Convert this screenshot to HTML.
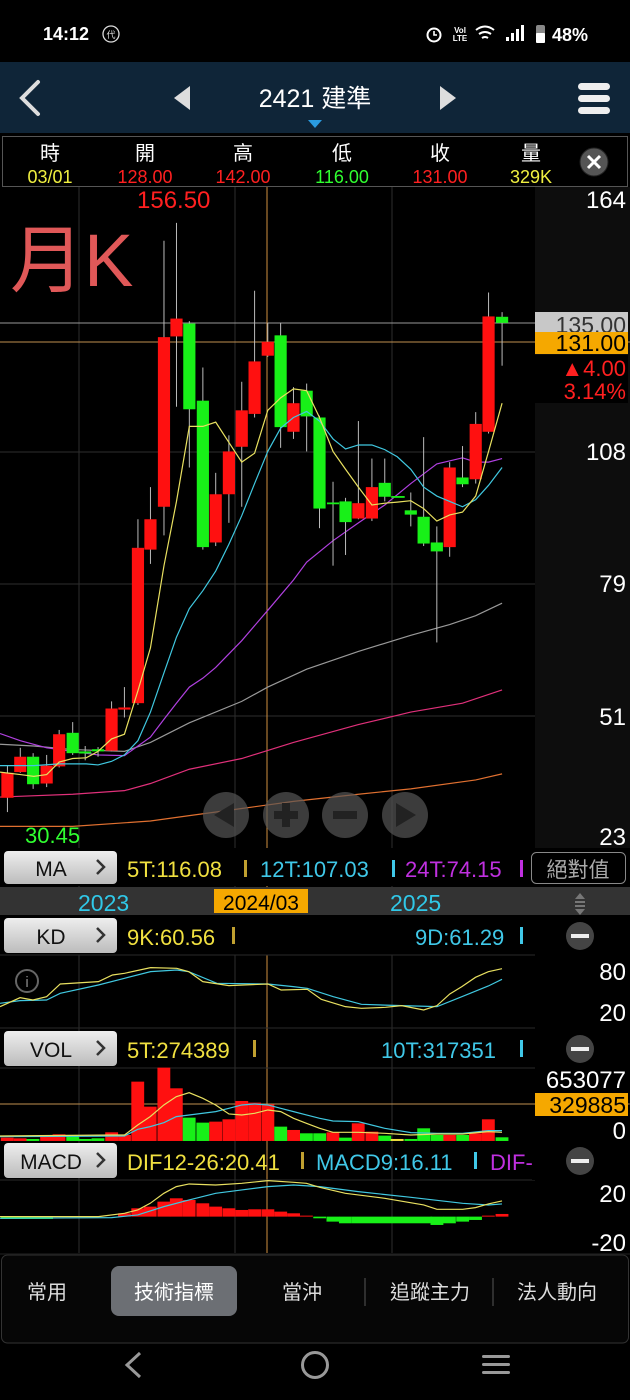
<!DOCTYPE html>
<html><head><meta charset="utf-8"><style>
html,body{margin:0;padding:0;background:#000;width:630px;height:1400px;overflow:hidden}
svg{display:block}
text{font-family:"Liberation Sans","Noto Sans CJK TC",sans-serif}
</style></head><body>
<svg width="630" height="1400" viewBox="0 0 630 1400" xmlns="http://www.w3.org/2000/svg">
<rect width="630" height="1400" fill="#000"/>
<!-- status bar -->
<text x="43" y="40" font-size="18" fill="#fff" font-weight="bold">14:12</text>
<circle cx="111" cy="34" r="8" fill="none" stroke="#ddd" stroke-width="1.3"/>
<text x="111" y="38" font-size="9" fill="#ddd" text-anchor="middle">代</text>
<circle cx="434" cy="35" r="6.5" fill="none" stroke="#fff" stroke-width="2"/>
<path d="M434 31v4h3" stroke="#fff" stroke-width="1.6" fill="none"/>
<text x="460" y="33" font-size="8" fill="#fff" font-weight="bold" text-anchor="middle">Vol</text>
<text x="460" y="41" font-size="8" fill="#fff" font-weight="bold" text-anchor="middle">LTE</text>
<path d="M476 30q9-7 18 0M479 34q6-4 12 0M482 38q3-2 6 0" stroke="#fff" stroke-width="2" fill="none"/>
<rect x="506" y="37" width="3" height="4" fill="#fff"/><rect x="511" y="33" width="3" height="8" fill="#fff"/><rect x="516" y="29" width="3" height="12" fill="#fff"/><rect x="521" y="25" width="3" height="16" fill="#fff"/>
<rect x="536" y="25" width="9" height="18" rx="2" fill="#888"/><rect x="536" y="33" width="9" height="10" rx="1" fill="#fff"/>
<text x="552" y="41" font-size="18" fill="#fff" font-weight="bold">48%</text>
<!-- nav -->
<rect x="0" y="62" width="630" height="71" fill="#0f2538"/>
<path d="M38 82 L22 98 L38 114" stroke="#ddd" stroke-width="4" fill="none" stroke-linecap="round"/>
<polygon points="174,98 190,86 190,110" fill="#ddd"/>
<polygon points="440,86 456,98 440,110" fill="#ddd"/>
<text x="315" y="107" font-size="25" fill="#fff" text-anchor="middle">2421 建準</text>
<polygon points="308,120 322,120 315,128" fill="#2a9be0"/>
<rect x="578" y="83" width="32" height="7" rx="3.5" fill="#eee"/><rect x="578" y="95" width="32" height="7" rx="3.5" fill="#eee"/><rect x="578" y="107" width="32" height="7" rx="3.5" fill="#eee"/>
<!-- info row -->
<rect x="2.5" y="136.5" width="625" height="50" fill="#000" stroke="#555"/>
<g font-size="20" fill="#fff" text-anchor="middle">
<text x="50" y="160">時</text><text x="145" y="160">開</text><text x="243" y="160">高</text><text x="342" y="160">低</text><text x="440" y="160">收</text><text x="531" y="160">量</text></g>
<g font-size="18" text-anchor="middle">
<text x="50" y="183" fill="#f0f040">03/01</text><text x="145" y="183" fill="#ff2020">128.00</text><text x="243" y="183" fill="#ff2020">142.00</text><text x="342" y="183" fill="#30ff30">116.00</text><text x="440" y="183" fill="#ff2020">131.00</text><text x="531" y="183" fill="#f0f040">329K</text></g>
<circle cx="594" cy="162" r="14" fill="#555" stroke="#222"/>
<path d="M588 156l12 12M600 156l-12 12" stroke="#fff" stroke-width="3"/>
<!-- chart right axis -->
<rect x="535" y="187" width="95" height="661" fill="#0d0d0d"/>
<!-- grid -->
<g stroke="#2e2e2e" stroke-width="1">
<line x1="79" y1="187" x2="79" y2="1253"/><line x1="235" y1="187" x2="235" y2="1253"/><line x1="392" y1="187" x2="392" y2="1253"/>
<line x1="0" y1="452" x2="535" y2="452"/><line x1="0" y1="584" x2="535" y2="584"/><line x1="0" y1="716" x2="535" y2="716"/>
</g>
<line x1="0" y1="323" x2="535" y2="323" stroke="#999"/>
<line x1="0" y1="342" x2="630" y2="342" stroke="#c09050"/>
<line x1="267" y1="187" x2="267" y2="1253" stroke="#d09040"/>
<text x="10" y="286" font-size="74" fill="#e05858">月K</text>
<text x="137" y="208" font-size="24" fill="#ff2020">156.50</text>
<!-- MA lines -->
<g transform="translate(0,280) scale(0.3381,0.3571)" fill="none" stroke-width="1.2">
<polyline vector-effect="non-scaling-stroke" stroke="#e07030" points="0,1530 215,1530 445,1515 560,1500 715,1480 868,1460 1060,1440 1215,1425 1407,1400 1485,1383"/>
<polyline vector-effect="non-scaling-stroke" stroke="#e0307a" points="0,1448 215,1440 368,1430 445,1410 560,1370 715,1340 868,1295 1060,1245 1215,1210 1368,1185 1485,1148"/>
<polyline vector-effect="non-scaling-stroke" stroke="#999" points="0,1300 100,1305 215,1315 368,1320 445,1295 560,1240 715,1180 792,1140 907,1090 1060,1040 1215,995 1330,965 1407,940 1485,905"/>
<polyline vector-effect="non-scaling-stroke" stroke="#b040e0" points="0,1270 60,1290 138,1310 215,1320 290,1330 368,1332 408,1305 445,1280 485,1230 522,1185 560,1140 600,1115 638,1085 715,1010 792,925 868,840 907,790 985,730 1060,680 1138,630 1215,570 1292,515 1368,498 1407,510 1445,510 1485,500"/>
</g>
<!-- candles -->
<g transform="translate(0,280) scale(0.3381,0.3571)">
<g stroke="#bbb" stroke-width="1">
<line vector-effect="non-scaling-stroke" x1="22" y1="1360" x2="22" y2="1490"/><line vector-effect="non-scaling-stroke" x1="60" y1="1310" x2="60" y2="1380"/><line vector-effect="non-scaling-stroke" x1="98" y1="1325" x2="98" y2="1425"/><line vector-effect="non-scaling-stroke" x1="138" y1="1330" x2="138" y2="1420"/><line vector-effect="non-scaling-stroke" x1="175" y1="1260" x2="175" y2="1365"/><line vector-effect="non-scaling-stroke" x1="215" y1="1238" x2="215" y2="1330"/><line vector-effect="non-scaling-stroke" x1="252" y1="1305" x2="252" y2="1345"/><line vector-effect="non-scaling-stroke" x1="290" y1="1308" x2="290" y2="1335"/><line vector-effect="non-scaling-stroke" x1="330" y1="1180" x2="330" y2="1320"/><line vector-effect="non-scaling-stroke" x1="368" y1="1140" x2="368" y2="1225"/><line vector-effect="non-scaling-stroke" x1="408" y1="670" x2="408" y2="1190"/><line vector-effect="non-scaling-stroke" x1="445" y1="580" x2="445" y2="795"/><line vector-effect="non-scaling-stroke" x1="485" y1="-110" x2="485" y2="715"/><line vector-effect="non-scaling-stroke" x1="522" y1="-160" x2="522" y2="355"/><line vector-effect="non-scaling-stroke" x1="560" y1="115" x2="560" y2="525"/><line vector-effect="non-scaling-stroke" x1="600" y1="245" x2="600" y2="755"/><line vector-effect="non-scaling-stroke" x1="638" y1="540" x2="638" y2="745"/><line vector-effect="non-scaling-stroke" x1="677" y1="435" x2="677" y2="680"/><line vector-effect="non-scaling-stroke" x1="715" y1="285" x2="715" y2="635"/><line vector-effect="non-scaling-stroke" x1="753" y1="30" x2="753" y2="385"/><line vector-effect="non-scaling-stroke" x1="792" y1="120" x2="792" y2="215"/><line vector-effect="non-scaling-stroke" x1="830" y1="120" x2="830" y2="470"/><line vector-effect="non-scaling-stroke" x1="868" y1="300" x2="868" y2="445"/><line vector-effect="non-scaling-stroke" x1="907" y1="290" x2="907" y2="480"/><line vector-effect="non-scaling-stroke" x1="945" y1="380" x2="945" y2="695"/><line vector-effect="non-scaling-stroke" x1="985" y1="565" x2="985" y2="800"/><line vector-effect="non-scaling-stroke" x1="1022" y1="610" x2="1022" y2="770"/><line vector-effect="non-scaling-stroke" x1="1060" y1="395" x2="1060" y2="670"/><line vector-effect="non-scaling-stroke" x1="1100" y1="500" x2="1100" y2="675"/><line vector-effect="non-scaling-stroke" x1="1138" y1="500" x2="1138" y2="620"/><line vector-effect="non-scaling-stroke" x1="1215" y1="595" x2="1215" y2="690"/><line vector-effect="non-scaling-stroke" x1="1253" y1="440" x2="1253" y2="745"/><line vector-effect="non-scaling-stroke" x1="1292" y1="690" x2="1292" y2="1015"/><line vector-effect="non-scaling-stroke" x1="1330" y1="510" x2="1330" y2="775"/><line vector-effect="non-scaling-stroke" x1="1368" y1="465" x2="1368" y2="580"/><line vector-effect="non-scaling-stroke" x1="1407" y1="370" x2="1407" y2="570"/><line vector-effect="non-scaling-stroke" x1="1445" y1="35" x2="1445" y2="430"/><line vector-effect="non-scaling-stroke" x1="1485" y1="90" x2="1485" y2="240"/>
</g>
<g fill="#ff1010">
<rect x="4" y="1380" width="36" height="70"/><rect x="42" y="1335" width="36" height="43"/><rect x="120" y="1360" width="36" height="50"/><rect x="157" y="1272" width="36" height="90"/><rect x="312" y="1200" width="36" height="118"/><rect x="350" y="1197" width="36" height="6"/><rect x="390" y="750" width="36" height="435"/><rect x="427" y="670" width="36" height="85"/><rect x="467" y="160" width="36" height="475"/><rect x="504" y="108" width="36" height="50"/><rect x="620" y="600" width="36" height="135"/><rect x="659" y="480" width="36" height="120"/><rect x="697" y="365" width="36" height="102"/><rect x="735" y="228" width="36" height="147"/><rect x="774" y="173" width="36" height="39"/><rect x="850" y="345" width="36" height="80"/><rect x="1042" y="625" width="36" height="43"/><rect x="1082" y="580" width="36" height="88"/><rect x="1312" y="525" width="36" height="223"/><rect x="1389" y="403" width="36" height="155"/><rect x="1427" y="102" width="36" height="323"/>
</g>
<g fill="#18f018">
<rect x="80" y="1335" width="36" height="77"/><rect x="197" y="1268" width="36" height="57"/><rect x="234" y="1320" width="36" height="6"/><rect x="272" y="1314" width="36" height="6"/><rect x="542" y="122" width="36" height="240"/><rect x="582" y="338" width="36" height="410"/><rect x="812" y="155" width="36" height="257"/><rect x="889" y="310" width="36" height="72"/><rect x="927" y="385" width="36" height="255"/><rect x="967" y="623" width="36" height="5"/><rect x="1004" y="620" width="36" height="58"/><rect x="1120" y="568" width="36" height="39"/><rect x="1157" y="605" width="40" height="5"/><rect x="1197" y="645" width="36" height="12"/><rect x="1235" y="663" width="36" height="75"/><rect x="1274" y="735" width="36" height="25"/><rect x="1350" y="553" width="36" height="19"/><rect x="1467" y="103" width="36" height="17"/>
</g>
<g fill="none" stroke-width="1.2">
<polyline vector-effect="non-scaling-stroke" stroke="#40c8e0" points="0,1360 100,1360 175,1355 255,1355 290,1358 330,1348 368,1330 408,1290 445,1210 485,1100 522,1000 560,920 600,870 638,815 677,740 715,660 753,570 792,480 830,415 868,385 907,368 945,395 985,445 1022,473 1060,462 1100,462 1138,475 1175,495 1215,530 1253,580 1292,605 1330,620 1368,635 1407,615 1445,575 1485,525"/>
<polyline vector-effect="non-scaling-stroke" stroke="#e8e060" points="0,1378 60,1385 100,1390 138,1385 175,1350 215,1340 255,1338 290,1320 330,1285 368,1272 408,1150 445,1030 485,800 522,620 560,410 600,410 638,398 677,455 715,510 753,485 792,365 830,330 868,305 907,310 945,385 985,480 1022,530 1060,580 1100,630 1138,625 1175,622 1215,618 1253,640 1292,675 1330,658 1368,650 1407,605 1445,480 1485,345"/>
</g>
</g>
<!-- zoom buttons -->
<g fill="#555" fill-opacity="0.7">
<circle cx="226" cy="815" r="23"/><circle cx="286" cy="815" r="23"/><circle cx="345" cy="815" r="23"/><circle cx="405" cy="815" r="23"/></g>
<g fill="#222">
<polygon points="214,815 234,803 234,827"/><rect x="274" y="811" width="24" height="8"/><rect x="282" y="803" width="8" height="24"/><rect x="333" y="811" width="24" height="8"/><polygon points="396,803 416,815 396,827"/></g>
<text x="25" y="843" font-size="22" fill="#30ff30">30.45</text>
<!-- right axis labels -->
<g font-size="24" fill="#fff" text-anchor="end">
<text x="626" y="208">164</text><text x="626" y="460">108</text><text x="626" y="592">79</text><text x="626" y="725">51</text><text x="626" y="845">23</text></g>
<rect x="535" y="312" width="93" height="21" fill="#c8c8c8"/>
<text x="626" y="333" font-size="23" fill="#333" text-anchor="end">135.00</text>
<rect x="535" y="332" width="93" height="22" fill="#f5a800"/>
<text x="626" y="351" font-size="23" fill="#000" text-anchor="end">131.00</text>
<rect x="535" y="355" width="93" height="48" fill="#000"/>
<text x="626" y="376" font-size="22" fill="#ff2020" text-anchor="end">▲4.00</text>
<text x="626" y="399" font-size="22" fill="#ff2020" text-anchor="end">3.14%</text>
<!-- MA row -->
<rect x="0" y="848" width="630" height="38" fill="#000"/>
<defs><linearGradient id="bg" x1="0" y1="0" x2="0" y2="1"><stop offset="0" stop-color="#eee"/><stop offset="1" stop-color="#bcbcbc"/></linearGradient></defs>
<rect x="4" y="851" width="113" height="33" rx="4" fill="url(#bg)"/>
<text x="51" y="876" font-size="21" fill="#111" text-anchor="middle">MA</text>
<path d="M97 860l7 7-7 7" stroke="#333" stroke-width="2.5" fill="none"/>
<g font-size="22"><text x="127" y="877" fill="#f0e040">5T:116.08</text><text x="260" y="877" fill="#40c8e8">12T:107.03</text><text x="405" y="877" fill="#c030e0">24T:74.15</text></g>
<rect x="244" y="860" width="3" height="17" fill="#c0a030"/><rect x="392" y="860" width="3" height="17" fill="#40c8e8"/><rect x="520" y="860" width="3" height="17" fill="#c030e0"/>
<rect x="531.5" y="852.5" width="94" height="31" rx="5" fill="#000" stroke="#888"/>
<text x="578" y="877" font-size="21" fill="#aaa" text-anchor="middle">絕對值</text>
<!-- date bar -->
<rect x="0" y="887" width="630" height="28" fill="#333"/>
<g font-size="23"><text x="78" y="911" fill="#30c8e8">2023</text><text x="390" y="911" fill="#30c8e8">2025</text></g>
<rect x="214" y="889" width="94" height="24" fill="#f5a800"/>
<text x="261" y="910" font-size="21" fill="#000" text-anchor="middle">2024/03</text>
<polygon points="575,899 585,899 580,893" fill="#777"/><rect x="575" y="901" width="10" height="2" fill="#777"/><rect x="575" y="905" width="10" height="2" fill="#777"/><polygon points="575,909 585,909 580,915" fill="#777"/>
<!-- KD row -->
<rect x="0" y="915" width="535" height="40" fill="#000"/>
<rect x="4" y="918" width="113" height="35" rx="4" fill="url(#bg)"/>
<text x="51" y="944" font-size="21" fill="#111" text-anchor="middle">KD</text>
<path d="M97 928l7 7-7 7" stroke="#333" stroke-width="2.5" fill="none"/>
<text x="127" y="945" font-size="22" fill="#f0e040">9K:60.56</text>
<rect x="232" y="927" width="3" height="17" fill="#c0a030"/>
<text x="415" y="945" font-size="22" fill="#40c8e8">9D:61.29</text>
<rect x="520" y="927" width="3" height="17" fill="#40c8e8"/>
<g fill="#444"><circle cx="580" cy="936" r="14"/><circle cx="580" cy="1049" r="14"/><circle cx="580" cy="1161" r="14"/></g>
<g fill="#eee"><rect x="571" y="934" width="18" height="4"/><rect x="571" y="1047" width="18" height="4"/><rect x="571" y="1159" width="18" height="4"/></g>
<line x1="0" y1="955" x2="535" y2="955" stroke="#2a2a2a"/>
<line x1="0" y1="1028" x2="535" y2="1028" stroke="#2a2a2a"/>
<line x1="0" y1="1068" x2="535" y2="1068" stroke="#2a2a2a"/>
<line x1="0" y1="1180" x2="535" y2="1180" stroke="#2a2a2a"/>
<circle cx="27" cy="981" r="11" fill="none" stroke="#666" stroke-width="2"/>
<text x="27" y="987" font-size="15" fill="#888" text-anchor="middle">i</text>
<g font-size="24" fill="#fff" text-anchor="end"><text x="626" y="980">80</text><text x="626" y="1021">20</text><text x="626" y="1088">653077</text><text x="626" y="1139">0</text><text x="626" y="1202">20</text><text x="626" y="1251">-20</text></g>
<!-- VOL row -->
<rect x="4" y="1031" width="113" height="35" rx="4" fill="url(#bg)"/>
<text x="51" y="1057" font-size="21" fill="#111" text-anchor="middle">VOL</text>
<path d="M97 1041l7 7-7 7" stroke="#333" stroke-width="2.5" fill="none"/>
<text x="127" y="1058" font-size="22" fill="#f0e040">5T:274389</text>
<rect x="253" y="1040" width="3" height="17" fill="#c0a030"/>
<text x="381" y="1058" font-size="22" fill="#40c8e8">10T:317351</text>
<rect x="520" y="1040" width="3" height="17" fill="#40c8e8"/>
<!-- MACD row -->
<rect x="4" y="1143" width="113" height="35" rx="4" fill="url(#bg)"/>
<text x="51" y="1169" font-size="21" fill="#111" text-anchor="middle">MACD</text>
<path d="M97 1153l7 7-7 7" stroke="#333" stroke-width="2.5" fill="none"/>
<text x="127" y="1170" font-size="22" fill="#f0e040">DIF12-26:20.41</text>
<rect x="301" y="1152" width="3" height="17" fill="#c0a030"/>
<text x="316" y="1170" font-size="22" fill="#40c8e8">MACD9:16.11</text>
<rect x="474" y="1152" width="3" height="17" fill="#40c8e8"/>
<text x="490" y="1170" font-size="22" fill="#c030e0">DIF-</text>
<rect x="532" y="1140" width="3" height="40" fill="#000"/>
<!-- lower panels drawing -->
<g transform="translate(0,840) scale(0.4016,0.3333)">
<line vector-effect="non-scaling-stroke" x1="0" y1="792" x2="1568" y2="792" stroke="#c09050"/>
<g fill="#ff1010">
<rect x="2" y="893" width="32" height="10"/><rect x="34" y="895" width="32" height="8"/><rect x="100" y="885" width="32" height="18"/><rect x="131" y="883" width="32" height="20"/><rect x="262" y="877" width="32" height="26"/><rect x="294" y="885" width="32" height="18"/><rect x="327" y="725" width="32" height="178"/><rect x="358" y="800" width="32" height="103"/><rect x="392" y="683" width="32" height="220"/><rect x="423" y="745" width="32" height="158"/><rect x="521" y="845" width="32" height="58"/><rect x="554" y="838" width="32" height="65"/><rect x="586" y="783" width="32" height="120"/><rect x="618" y="788" width="32" height="115"/><rect x="651" y="793" width="32" height="110"/><rect x="715" y="870" width="32" height="33"/><rect x="813" y="877" width="32" height="26"/><rect x="876" y="850" width="32" height="53"/><rect x="910" y="875" width="32" height="28"/><rect x="1103" y="885" width="32" height="18"/><rect x="1168" y="880" width="32" height="23"/><rect x="1200" y="838" width="32" height="65"/>
</g>
<g fill="#18f018">
<rect x="66" y="897" width="32" height="6"/><rect x="165" y="885" width="32" height="18"/><rect x="196" y="897" width="32" height="6"/><rect x="228" y="895" width="32" height="8"/><rect x="455" y="833" width="32" height="70"/><rect x="489" y="848" width="32" height="55"/><rect x="683" y="860" width="32" height="43"/><rect x="747" y="880" width="32" height="23"/><rect x="780" y="880" width="32" height="23"/><rect x="844" y="893" width="32" height="10"/><rect x="942" y="887" width="32" height="16"/><rect x="1007" y="897" width="32" height="6"/><rect x="1039" y="865" width="32" height="38"/><rect x="1072" y="885" width="32" height="18"/><rect x="1136" y="885" width="32" height="18"/><rect x="1234" y="892" width="32" height="11"/>
</g>
<rect x="973" y="897" width="32" height="6" fill="#f0e040"/>
<!-- MACD hist -->
<g fill="#ff1010">
<rect x="294" y="1120" width="32" height="10"/><rect x="327" y="1105" width="32" height="25"/><rect x="358" y="1100" width="32" height="30"/><rect x="392" y="1085" width="32" height="45"/><rect x="423" y="1075" width="32" height="55"/><rect x="455" y="1080" width="32" height="50"/><rect x="489" y="1090" width="32" height="40"/><rect x="521" y="1100" width="32" height="30"/><rect x="554" y="1105" width="32" height="25"/><rect x="586" y="1110" width="32" height="20"/><rect x="618" y="1108" width="32" height="22"/><rect x="651" y="1108" width="32" height="22"/><rect x="683" y="1115" width="32" height="15"/><rect x="715" y="1120" width="32" height="10"/><rect x="747" y="1127" width="32" height="3"/><rect x="1200" y="1127" width="32" height="3"/><rect x="1234" y="1122" width="32" height="8"/>
</g>
<g fill="#18f018">
<rect x="2" y="1130" width="130" height="7"/><rect x="780" y="1130" width="32" height="5"/><rect x="813" y="1130" width="32" height="15"/><rect x="844" y="1130" width="32" height="20"/><rect x="876" y="1130" width="200" height="20"/><rect x="1072" y="1130" width="32" height="25"/><rect x="1103" y="1130" width="32" height="20"/><rect x="1136" y="1130" width="32" height="15"/><rect x="1168" y="1130" width="32" height="10"/>
</g>
<g fill="none" stroke-width="1.2">
<polyline vector-effect="non-scaling-stroke" stroke="#40c8e0" points="0,490 50,482 116,480 150,460 245,435 310,415 375,395 440,390 470,395 540,430 667,432 730,440 765,445 830,470 900,493 1000,497 1088,500 1150,470 1216,438 1250,418"/>
<polyline vector-effect="non-scaling-stroke" stroke="#e8e060" points="0,500 50,473 82,480 116,470 150,432 245,425 280,405 310,400 375,383 440,385 470,395 505,425 570,437 667,432 700,450 765,448 800,478 860,500 900,505 960,502 1000,497 1055,510 1088,497 1120,462 1150,440 1184,412 1216,395 1250,386"/>
<polyline vector-effect="non-scaling-stroke" stroke="#40c8e0" points="0,890 310,888 343,868 374,860 408,848 439,830 471,825 537,815 570,805 602,795 634,792 667,795 699,805 731,815 763,825 796,835 829,843 892,845 958,865 1023,878 1088,880 1152,880 1216,872 1250,872"/>
<polyline vector-effect="non-scaling-stroke" stroke="#e8e060" points="0,888 278,885 310,885 343,855 374,830 408,795 439,770 471,758 505,775 537,795 570,822 602,825 634,820 667,810 699,815 731,835 763,850 796,865 829,877 892,877 958,880 1023,885 1088,882 1152,882 1216,875 1250,877"/>
<polyline vector-effect="non-scaling-stroke" stroke="#40c8e0" points="0,1135 278,1133 343,1125 408,1100 471,1080 537,1060 602,1050 667,1040 731,1035 796,1040 892,1055 1023,1072 1152,1090 1216,1095 1250,1092"/>
<polyline vector-effect="non-scaling-stroke" stroke="#e8e060" points="0,1130 245,1130 310,1120 343,1110 374,1090 408,1060 439,1040 471,1032 537,1035 602,1030 667,1022 731,1027 763,1030 796,1042 860,1060 958,1075 1055,1095 1088,1108 1152,1108 1184,1103 1216,1092 1250,1083"/>
</g>
</g>
<rect x="535" y="1093" width="93" height="23" fill="#f5a800"/>
<text x="626" y="1113" font-size="23" fill="#000" text-anchor="end">329885</text>
<!-- tab bar -->
<rect x="0" y="1253" width="630" height="2" fill="#111"/>
<rect x="1.5" y="1255" width="627" height="88" rx="6" fill="#060606" stroke="#333"/>
<rect x="111" y="1266" width="126" height="50" rx="8" fill="#6c6f74"/>
<g font-size="20" fill="#ddd" text-anchor="middle"><text x="47" y="1299">常用</text><text x="174" y="1299" fill="#fff">技術指標</text><text x="302" y="1299">當沖</text><text x="430" y="1299">追蹤主力</text><text x="557" y="1299">法人動向</text></g>
<line x1="365" y1="1278" x2="365" y2="1306" stroke="#555"/><line x1="493" y1="1278" x2="493" y2="1306" stroke="#555"/>
<!-- system nav -->
<path d="M140 1353 L127 1365 L140 1377" stroke="#999" stroke-width="3" fill="none"/>
<circle cx="315" cy="1365" r="12.5" fill="none" stroke="#999" stroke-width="3"/>
<g fill="#999"><rect x="482" y="1355" width="28" height="3" rx="1.5"/><rect x="482" y="1363" width="28" height="3" rx="1.5"/><rect x="482" y="1371" width="28" height="3" rx="1.5"/></g>
</svg>
</body></html>
